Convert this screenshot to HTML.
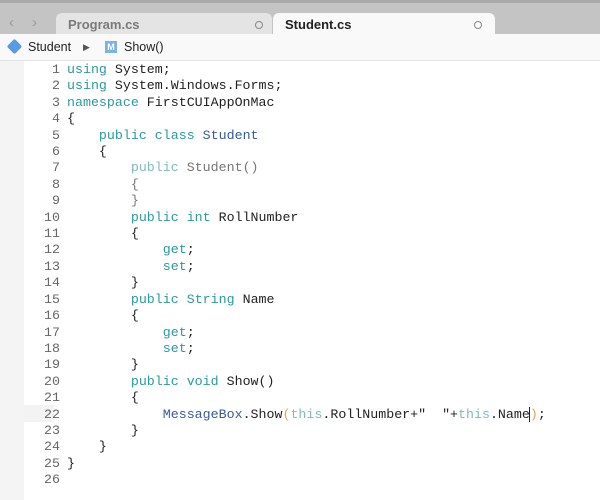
<!DOCTYPE html>
<html><head><style>
body{margin:0;width:600px;height:500px;overflow:hidden;background:#fff;font-family:"Liberation Sans",sans-serif;position:relative}
.top{position:absolute;left:0;top:0;width:600px;height:34px;background:#c4c4c4;border-top:3px solid #a9a9a9;box-sizing:border-box}
.tab{position:absolute;top:10px;height:24px;border-radius:6px 6px 0 0;font-weight:bold;font-size:13px;line-height:24px;box-sizing:border-box}
.t1{left:56px;width:216px;background:#e4e4e4;color:#7a7a7a;padding-left:12px}
.t2{left:273px;width:222px;background:#f9f9f9;color:#222;padding-left:12px}
.dot{position:absolute;top:8px;width:6px;height:6px;border:1.3px solid #888;border-radius:50%}
.nav{position:absolute;top:11px;color:#9a9a9a;font-size:15px}
.bc{position:absolute;left:0;top:34px;width:600px;height:26px;background:#f9f9f9;border-bottom:1px solid #e2e2e2;font-size:12.5px;color:#222;line-height:26px}
.gut{position:absolute;left:0;top:61px;width:24px;height:439px;background:#f4f4f4}
.hl{position:absolute;left:24px;top:405px;width:30px;height:17px;background:#f3f3f3}
pre{position:absolute;margin:0;top:62px;font-family:"Liberation Mono",monospace;font-size:13.3px;line-height:16.4px;color:#222}
.ln{left:26px;width:34px;text-align:right;color:#666}
.code{left:67px}
.k{color:#2a9a9c}.l{color:#7fbcbc}.g{color:#777}.t{color:#3a5a9a}.o{color:#e0a060}
.cur{border-left:1px solid #222;margin-left:-1px}
</style></head><body>
<div class="top">
<span class="nav" style="left:9px">&#x2039;</span><span class="nav" style="left:32px">&#x203A;</span>
<div class="tab t1">Program.cs<span class="dot" style="left:199px"></span></div>
<div class="tab t2">Student.cs<span class="dot" style="left:201px"></span></div>
</div>
<div class="bc">
<span style="position:absolute;left:9px;top:7px;width:11px;height:11px;background:#5a9ae0;transform:rotate(45deg);border-radius:2px"></span>
<span style="position:absolute;left:28px">Student</span>
<span style="position:absolute;left:83px;font-size:9px;color:#555">&#9654;</span>
<span style="position:absolute;left:105px;top:7px;width:12px;height:12px;background:#7fb0e8;color:#fff;font-size:9px;line-height:12px;text-align:center;font-weight:bold">M</span>
<span style="position:absolute;left:124px">Show()</span>
</div>
<div class="gut"></div><div class="hl"></div>
<pre class="ln">1
2
3
4
5
6
7
8
9
10
11
12
13
14
15
16
17
18
19
20
21
22
23
24
25
26</pre>
<pre class="code"><span class="k">using</span> System;
<span class="k">using</span> System.Windows.Forms;
<span class="k">namespace</span> FirstCUIAppOnMac
{
    <span class="k">public class</span> <span class="t">Student</span>
    {
        <span class="l">public</span> <span class="g">Student()</span>
        <span class="g">{</span>
        <span class="g">}</span>
        <span class="k">public int</span> RollNumber
        {
            <span class="k">get</span>;
            <span class="k">set</span>;
        }
        <span class="k">public</span> <span class="k">String</span> Name
        {
            <span class="k">get</span>;
            <span class="k">set</span>;
        }
        <span class="k">public void</span> Show()
        {
            <span class="t">MessageBox</span>.Show<span class="o">(</span><span class="l">this</span>.RollNumber+"  "+<span class="l">this</span>.Name<span class="o cur">)</span>;
        }
    }
}
</pre>
</body></html>
